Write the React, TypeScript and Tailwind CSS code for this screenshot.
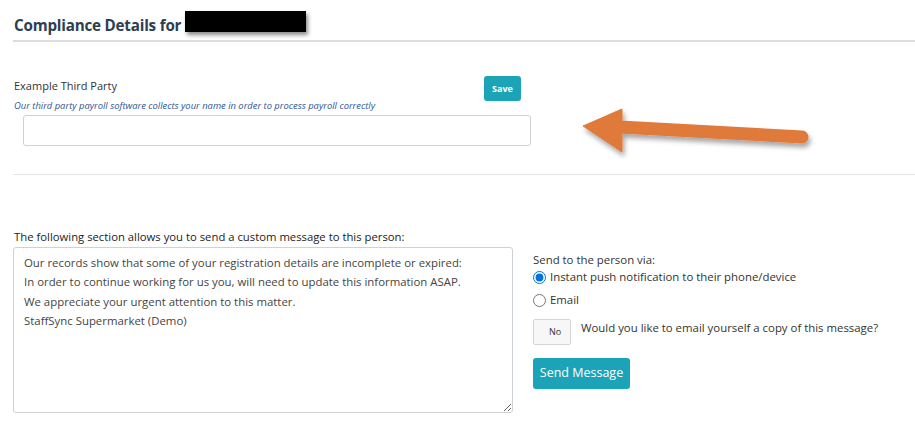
import { useState } from "react";

const messageInitial = [
  "Our records show that some of your registration details are incomplete or expired:",
  "In order to continue working for us you, will need to update this information ASAP.",
  "We appreciate your urgent attention to this matter.",
  "StaffSync Supermarket (Demo)",
].join("\n");

const Arrow = () => (
  <svg
    className="absolute left-[570px] top-[99px] pointer-events-none"
    width="250"
    height="62"
    viewBox="0 0 250 62"
  >
    <defs>
      <filter id="arrowShadow" x="-10%" y="-30%" width="130%" height="180%">
        <feDropShadow dx="2" dy="4" stdDeviation="2.5" floodColor="#000" floodOpacity="0.35" />
      </filter>
    </defs>
    <g filter="url(#arrowShadow)" fill="#e07a3a" stroke="#e07a3a">
      <line x1="50" y1="28" x2="232" y2="38" strokeWidth="13" strokeLinecap="round" />
      <polygon points="13,27 52,10 52,53" strokeWidth="1" strokeLinejoin="round" />
    </g>
  </svg>
);

export default function App() {
  const [thirdParty, setThirdParty] = useState("");
  const [message, setMessage] = useState(messageInitial);
  const [via, setVia] = useState("push");
  const [copy, setCopy] = useState(false);

  return (
    <div className="relative w-[915px] h-[423px] overflow-hidden bg-white font-['Open_Sans',sans-serif] text-[#333]">
      <div className="pt-[14px] h-[42px] flex items-start border-b-2 border-[#dddddd] ml-[13px]">
        <h2 className="text-[15.2px] font-bold text-[#2c3e50] leading-[22px] ml-[1px] tracking-[-0.2px]">
          Compliance Details for
        </h2>
        <div className="ml-[4px] -mt-[3px] w-[121px] h-[21px] bg-black shadow-[2px_3px_4px_rgba(0,0,0,0.45)]" />
      </div>

      <div className="relative h-[133px] border-b border-[#e6e6e6] ml-[13px]">
        <div className="absolute left-[1px] top-[36px] text-[11px] leading-[16px] text-[#333]">
          Example Third Party
        </div>
        <button
          type="button"
          className="absolute left-[471px] top-[34px] w-[37px] h-[25px] rounded-[3px] bg-[#1ba3b8] text-white text-[9px] font-bold"
        >
          Save
        </button>
        <div className="absolute left-[1px] top-[57px] text-[9.4px] italic text-[#2d5597] leading-[13px]">
          Our third party payroll software collects your name in order to process payroll correctly
        </div>
        <input
          value={thirdParty}
          onChange={(e) => setThirdParty(e.target.value)}
          className="absolute left-[10px] top-[73px] w-[508px] h-[31px] border border-[#cdd2d6] rounded-[3px] outline-none px-2 text-[12px]"
        />
      </div>

      <div className="flex pl-[13px] pt-[54px]">
        <div className="w-[500px]">
          <div className="text-[11.3px] leading-[16px] pl-[1px] text-[#222]">
            The following section allows you to send a custom message to this person:
          </div>
          <textarea
            value={message}
            onChange={(e) => setMessage(e.target.value)}
            className="block mt-[2px] w-[500px] h-[166px] border border-[#cdd2d6] rounded-[3px] px-[10px] py-[5px] text-[11.4px] leading-[19.3px] text-[#444] outline-none resize-y font-['Open_Sans',sans-serif]"
          />
        </div>

        <div className="ml-[20px] pt-[23px] text-[11.4px] text-[#333]">
          <div className="leading-[16px]">Send to the person via:</div>
          <label className="flex items-center gap-[4px] mt-[1px] leading-[16px]">
            <input
              type="radio"
              checked={via === "push"}
              onChange={() => setVia("push")}
              className="w-[13px] h-[13px] m-0 accent-[#0a72d6]"
            />
            Instant push notification to their phone/device
          </label>
          <label className="flex items-center gap-[4px] mt-[7px] leading-[16px]">
            <input
              type="radio"
              checked={via === "email"}
              onChange={() => setVia("email")}
              className="w-[13px] h-[13px] m-0 accent-[#0a72d6]"
            />
            Email
          </label>
          <div className="flex items-start gap-[10px] mt-[11px]">
            <button
              type="button"
              onClick={() => setCopy(!copy)}
              className="w-[38px] h-[26px] border border-[#d5d5d5] rounded-[2px] bg-[#f7f7f7] text-[9px] text-[#333] pl-[6px]"
            >
              {copy ? "Yes" : "No"}
            </button>
            <div className="leading-[16px] pt-[1px]">Would you like to email yourself a copy of this message?</div>
          </div>
          <button
            type="button"
            className="mt-[13px] w-[97px] h-[31px] rounded-[3px] bg-[#1ba3b8] text-white text-[12.5px] font-medium"
          >
            Send Message
          </button>
        </div>
      </div>

      <Arrow />
    </div>
  );
}
